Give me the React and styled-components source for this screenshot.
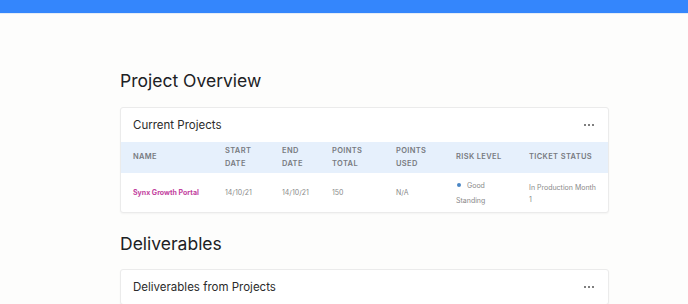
import React from "react";
import styled, { createGlobalStyle } from "styled-components";

const GlobalStyle = createGlobalStyle`
  html, body {
    margin: 0;
    padding: 0;
    background: #fdfdfc;
    font-family: "Inter", "Open Sans", sans-serif;
  }
`;

const TopBar = styled.div`
  height: 13px;
  background: #3486fc;
  border-bottom: 1px solid #e4ecf6;
`;

const Page = styled.main`
  width: 489px;
  margin: 0 0 0 120px;
  padding-top: 55px;
`;

const SectionTitle = styled.h1`
  margin: 0 0 ${(p) => p.$gap || 14}px;
  font-size: 17.5px;
  font-weight: 400;
  line-height: 24px;
  color: #202124;
`;

const Card = styled.section`
  background: #ffffff;
  border: 1px solid #ebebeb;
  border-radius: 3px;
  box-shadow: 0 1px 2px rgba(0, 0, 0, 0.04);
  margin-bottom: 19px;
  overflow: hidden;
`;

const CardHeader = styled.div`
  display: flex;
  align-items: center;
  justify-content: space-between;
  height: 34px;
  padding: 0 13px 0 12px;
`;

const CardTitle = styled.h2`
  margin: 0;
  font-size: 11.5px;
  font-weight: 400;
  color: #2b2b2b;
`;

const MoreButton = styled.span`
  display: flex;
  gap: 2px;
  margin-right: 1px;
  & > i {
    width: 2px;
    height: 2px;
    border-radius: 50%;
    background: #555;
  }
`;

const Row = styled.div`
  display: grid;
  grid-template-columns: 92px 57px 50px 64px 60px 73px 1fr;
  align-items: center;
  padding-left: 12px;
  height: ${(p) => p.$height}px;
  background: ${(p) => p.$bg || "transparent"};
`;

const HeadCell = styled.div`
  font-size: 7.5px;
  font-weight: 600;
  line-height: 12.5px;
  letter-spacing: 0.35px;
  text-transform: uppercase;
  color: #777a80;
`;

const Cell = styled.div`
  font-size: 7px;
  line-height: 12px;
  color: #8a8a8a;
`;

const NameLink = styled.a`
  font-size: 7px;
  font-weight: 700;
  color: #c2419e;
  text-decoration: none;
`;

const Risk = styled.div`
  font-size: 7px;
  line-height: 15px;
  color: #8a8a8a;
  &::before {
    content: "";
    display: inline-block;
    width: 4px;
    height: 4px;
    margin: 0 6px 1px 1px;
    border-radius: 50%;
    background: #4a86c5;
    vertical-align: middle;
  }
`;

const Status = styled(Cell)`
  width: 67px;
  padding-top: 2px;
`;

const Dots = () => (
  <MoreButton>
    <i />
    <i />
    <i />
  </MoreButton>
);

const headers = [
  "Name",
  ["Start", "Date"],
  ["End", "Date"],
  ["Points", "Total"],
  ["Points", "Used"],
  "Risk Level",
  "Ticket Status",
];

export default function App() {
  return (
    <>
      <GlobalStyle />
      <TopBar />
      <Page>
        <SectionTitle>Project Overview</SectionTitle>
        <Card>
          <CardHeader>
            <CardTitle>Current Projects</CardTitle>
            <Dots />
          </CardHeader>
          <Row $height={31} $bg="#e6f0fc">
            {headers.map((h, i) => (
              <HeadCell key={i}>
                {Array.isArray(h) ? (
                  <>
                    {h[0]}
                    <br />
                    {h[1]}
                  </>
                ) : (
                  h
                )}
              </HeadCell>
            ))}
          </Row>
          <Row $height={39}>
            <NameLink href="#">Synx Growth Portal</NameLink>
            <Cell>14/10/21</Cell>
            <Cell>14/10/21</Cell>
            <Cell>150</Cell>
            <Cell>N/A</Cell>
            <Risk>
              Good
              <br />
              Standing
            </Risk>
            <Status>In Production Month 1</Status>
          </Row>
        </Card>
        <SectionTitle $gap={13}>Deliverables</SectionTitle>
        <Card>
          <CardHeader>
            <CardTitle>Deliverables from Projects</CardTitle>
            <Dots />
          </CardHeader>
        </Card>
      </Page>
    </>
  );
}
